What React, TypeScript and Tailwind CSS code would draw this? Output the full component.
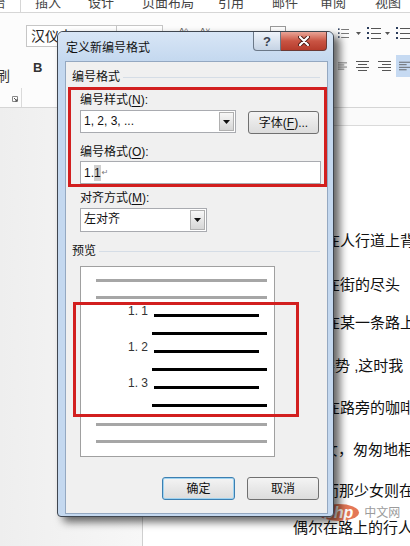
import React from "react";

const U = ({ c }: { c: string }) => <span className="underline underline-offset-[2px]">{c}</span>;

const Caret = () => (
  <svg width="7" height="4" viewBox="0 0 7 4">
    <path d="M0 0h7L3.5 4z" fill="#111" />
  </svg>
);

const Combo = ({ value, className }: { value: string; className: string }) => (
  <div className={`flex border border-[#a9abb0] bg-white ${className}`}>
    <span className="flex-1 pl-[3px] text-[12px] leading-[21px] text-[#111]">{value}</span>
    <span className="m-px flex w-[15px] items-center justify-center border border-[#b0b0b0] bg-linear-to-b from-[#f7f7f7] to-[#d6d6d6]">
      <Caret />
    </span>
  </div>
);

const Btn = ({ children, className }: { children: React.ReactNode; className: string }) => (
  <div
    className={`flex h-[23px] items-center justify-center rounded-[3px] border bg-linear-to-b from-[#f4f4f4] to-[#dcdcdc] text-[12px] text-[#111] ${className}`}
  >
    {children}
  </div>
);

const GroupHead = ({ label, className }: { label: string; className: string }) => (
  <div className={`flex h-[14px] items-center pl-[6px] pr-[7px] ${className}`}>
    <span className="text-[12px] leading-[14px] text-[#111]">{label}</span>
    <span className="ml-[3px] h-px flex-1 bg-[#d5dde6]" />
  </div>
);

const NumItem = ({ n, first }: { n: string; first: string }) => (
  <>
    <div className={`flex h-[12px] items-end ${first}`}>
      <span className="w-[67px] text-right text-[12px] leading-[12px] text-[#333]">{n}</span>
      <span className="ml-[6px] h-[3px] w-[105px] bg-black" />
    </div>
    <div className="mt-[15px] ml-[71px] h-[3px] w-[115px] bg-black" />
  </>
);

const docLines = [
  { t: "在人行道上背", cls: "mt-[105px] pl-[182px]" },
  { t: "在街的尽头", cls: "mt-[24px] pl-[182px]" },
  { t: "在某一条路上", cls: "mt-[18px] pl-[182px]" },
  { t: "姿势 ,这时我", cls: "mt-[23px] pl-[177px]" },
  { t: "在路旁的咖啡", cls: "mt-[22px] pl-[182px]" },
  { t: "女，匆匆地相", cls: "mt-[22px] pl-[180px]" },
  { t: "而那少女则在", cls: "mt-[21px] pl-[181px]" },
  { t: "偶尔在路上的行人", cls: "mt-[17px] pl-[150px]" },
];

const Lines = ({ n, dots }: { n: number; dots?: boolean }) => (
  <svg width="14" height="13" viewBox="0 0 14 13">
    {[1, 6, 11].slice(0, n).map((y) => (
      <g key={y}>
        {dots && <rect x="0" y={y - 1} width="2" height="2" fill="#2b3d5c" />}
        <rect x={dots ? 4 : 0} y={y} width={dots ? 10 : 14} height="1" fill="#555" />
      </g>
    ))}
  </svg>
);

const Align = ({ kind }: { kind: "l" | "c" | "r" }) => (
  <svg width="13" height="12" viewBox="0 0 13 12">
    {[1, 4, 7, 10].map((y, i) => {
      const w = i % 2 === 0 ? 13 : 9;
      const x = kind === "l" ? 0 : kind === "r" ? 13 - w : (13 - w) / 2;
      return <rect key={y} x={x} y={y} width={w} height="1" fill="#555" />;
    })}
  </svg>
);

export default function App() {
  return (
    <div className="relative flex h-[546px] w-[410px] flex-col overflow-hidden bg-white font-['Liberation_Sans','Noto_Sans_CJK_SC',sans-serif]">
      {/* tab row, mostly scrolled off */}
      <div className="flex h-[13px] shrink-0 overflow-hidden border-b border-[#d6d6d6] text-[13px] leading-[14px] text-[#444]">
        <span className="-mt-[4px] -ml-[8px] shrink-0">始</span>
        <span className="ml-[15px] h-full w-px shrink-0 bg-[#d6d6d6]" />
        <span className="-mt-[4px] ml-[14px] shrink-0">插入</span>
        <span className="-mt-[4px] ml-[27px] shrink-0">设计</span>
        <span className="-mt-[4px] ml-[28px] shrink-0">页面布局</span>
        <span className="-mt-[4px] ml-[24px] shrink-0">引用</span>
        <span className="-mt-[4px] ml-[28px] shrink-0">邮件</span>
        <span className="-mt-[4px] ml-[22px] shrink-0">审阅</span>
        <span className="-mt-[4px] ml-[29px] shrink-0">视图</span>
      </div>

      {/* ribbon */}
      <div className="flex h-[95px] shrink-0 border-b border-[#d5d5d5] bg-[#fcfcfc]">
        <div className="flex w-[22px] shrink-0 flex-col">
          <span className="mt-[56px] -ml-[4px] text-[14px] leading-[14px] text-[#333]">刷</span>
          <div className="mt-auto flex items-end">
            <svg width="6" height="6" viewBox="0 0 6 6" className="mb-[5px] ml-[12px]">
              <path d="M0.5 0.5h5v5h-5z" fill="none" stroke="#888" />
              <path d="M2 2l3 3M5 3v2H3" stroke="#555" fill="none" />
            </svg>
            <span className="ml-auto h-[19px] w-px bg-[#dadada]" />
          </div>
        </div>
        <div className="flex flex-col pl-[4px]">
          <div className="mt-[12px] flex h-[22px]">
            <div className="w-[91px] border border-[#c6c6c6] bg-white pl-[4px] text-[14px] leading-[20px] text-[#222]">汉仪中</div>
            <div className="w-[46px] border border-l-0 border-[#c6c6c6] bg-white" />
            <span className="ml-[16px] mt-[2px] text-[8px] leading-[8px] text-[#555]">A^</span>
            <span className="ml-[12px] mt-[2px] text-[8px] leading-[8px] text-[#555]">A˅</span>
            <span className="ml-[60px] mt-[1px] h-[9px] w-[16px] border border-[#999]" />
          </div>
          <span className="mt-[14px] ml-[7px] text-[13px] font-bold leading-[13px] text-[#333]">B</span>
        </div>
        <div className="ml-auto flex w-[74px] flex-col pl-[2px]">
          <div className="mt-[14px] flex items-center">
            <Lines n={3} dots />
            <span className="ml-[7px]"><svg width="5" height="3" viewBox="0 0 5 3"><path d="M0 0h5L2.5 3z" fill="#555" /></svg></span>
            <span className="ml-[6px]"><Lines n={3} dots /></span>
            <span className="ml-[4px]"><svg width="5" height="3" viewBox="0 0 5 3"><path d="M0 0h5L2.5 3z" fill="#555" /></svg></span>
            <span className="ml-[6px]"><Lines n={3} dots /></span>
          </div>
          <div className="mt-[15px] flex items-center">
            <Align kind="l" />
            <span className="ml-[9px]"><Align kind="c" /></span>
            <span className="ml-[9px]"><Align kind="r" /></span>
            <span className="ml-[5px] flex h-[22px] w-[14px] items-center bg-[#c6daf2] pl-[3px]"><Align kind="l" /></span>
          </div>
        </div>
      </div>

      {/* document area */}
      <div className="flex flex-1">
        <div className="w-[143px] shrink-0 border-r border-[#cfcfcf] bg-linear-to-r from-[#eeeeee] to-[#f7f7f7]" />
        <div className="flex flex-1 flex-col">
          <div className="h-[18px] shrink-0 border-b border-[#dadada] bg-[#fafafa]" />
          {docLines.map((l) => (
            <div key={l.t} className={`h-[20px] whitespace-nowrap text-[15px] leading-[20px] text-[#111] ${l.cls}`}>
              {l.t}
            </div>
          ))}
        </div>
      </div>

      {/* watermark */}
      <div className="absolute left-[318px] top-[504px] flex items-center opacity-85">
        <span className="rounded-[50%] bg-[#e0603a] px-[6px] text-[16px] font-bold italic leading-[17px] text-white">php</span>
        <span className="ml-[5px] text-[12px] leading-[14px] text-[#8a8a8a]">中文网</span>
      </div>

      {/* dialog */}
      <div className="absolute left-[57px] top-[31px] flex h-[486px] w-[277px] flex-col rounded-t-[6px] rounded-b-[4px] border border-[#3f4650] bg-[#c4d8ef] shadow-[6px_5px_8px_rgba(0,0,0,0.6)]">
        <div className="flex h-[29px] shrink-0 rounded-t-[5px] bg-linear-to-b from-[#d8e6f6] to-[#c4d8ef]">
          <span className="pl-[8px] pt-[9px] text-[12px] leading-[14px] text-[#111]">定义新编号格式</span>
          <div className="ml-auto mr-[6px] flex h-[19px]">
            <div className="flex w-[28px] items-center justify-center rounded-bl-[4px] border border-t-0 border-[#6b7888] bg-linear-to-b from-[#eef3fa] to-[#c5d3e4] text-[13px] font-bold leading-[13px] text-[#3a4250]">
              ?
            </div>
            <div className="flex w-[46px] items-center justify-center rounded-br-[4px] border border-t-0 border-l-0 border-[#6b3a36] bg-linear-to-b from-[#e9a497] via-[#c95443] to-[#b63c2c]">
              <svg width="12" height="10" viewBox="0 0 12 10">
                <path d="M2 1l8 8M10 1L2 9" stroke="#4a1a14" strokeWidth="4" strokeLinecap="round" />
                <path d="M2 1l8 8M10 1L2 9" stroke="#fff" strokeWidth="2.2" strokeLinecap="round" />
              </svg>
            </div>
          </div>
        </div>

        <div className="mb-[2px] ml-[7px] mr-[5px] flex flex-1 flex-col border border-[#94a8c1] bg-[#f0f0f0] text-[12px] leading-[14px] text-[#111]">
          <GroupHead label="编号格式" className="mt-[8px]" />

          <div className="ml-[2px] mt-[3px] flex h-[100px] flex-col border-[3px] border-[#d21f1f] pl-[9px]">
            <span className="mt-[3px]">
              编号样式(<U c="N" />):
            </span>
            <div className="mt-[3px] flex">
              <Combo value="1, 2, 3, ..." className="h-[23px] w-[156px]" />
              <Btn className="ml-[12px] mt-px h-[22px] w-[71px] border-[#707070]">
                字体(<U c="F" />)...
              </Btn>
            </div>
            <span className="mt-[11px]">
              编号格式(<U c="O" />):
            </span>
            <div className="mt-[2px] flex h-[24px] w-[241px] items-center border border-[#a9abb0] bg-white pl-[3px]">
              <span>1.</span>
              <span className="bg-[#cfcfcf] leading-[16px]">1</span>
              <span className="ml-px font-['DejaVu_Sans',sans-serif] text-[8px] leading-[8px] text-[#777]">↵</span>
            </div>
          </div>

          <span className="ml-[14px] mt-[4px]">
            对齐方式(<U c="M" />):
          </span>
          <Combo value="左对齐" className="ml-[14px] mt-[3px] h-[24px] w-[127px]" />

          <GroupHead label="预览" className="mt-[12px]" />

          <div className="ml-[14px] mt-[8px] flex h-[191px] w-[195px] flex-col border border-[#a0a0a0] bg-white">
            <div className="ml-[15px] mt-[12px] h-[3px] w-[171px] bg-[#a6a6a6]" />
            <div className="ml-[15px] mt-[14px] h-[3px] w-[171px] bg-[#a6a6a6]" />
            <NumItem n="1. 1" first="mt-[6px]" />
            <NumItem n="1. 2" first="mt-[6px]" />
            <NumItem n="1. 3" first="mt-[6px]" />
            <div className="ml-[15px] mt-[16px] h-[3px] w-[171px] bg-[#a6a6a6]" />
            <div className="ml-[15px] mt-[14px] h-[3px] w-[171px] bg-[#a6a6a6]" />
          </div>

          <div className="ml-[96px] mt-[20px] flex">
            <Btn className="w-[73px] border-[#3c7fb1] shadow-[inset_0_0_0_1px_#9fd3f0]">确定</Btn>
            <Btn className="ml-[12px] w-[72px] border-[#707070]">取消</Btn>
          </div>
        </div>

        {/* annotation over the preview */}
        <div className="absolute left-[15px] top-[270px] h-[115px] w-[226px] border-[3px] border-[#d21f1f]" />
      </div>
    </div>
  );
}
